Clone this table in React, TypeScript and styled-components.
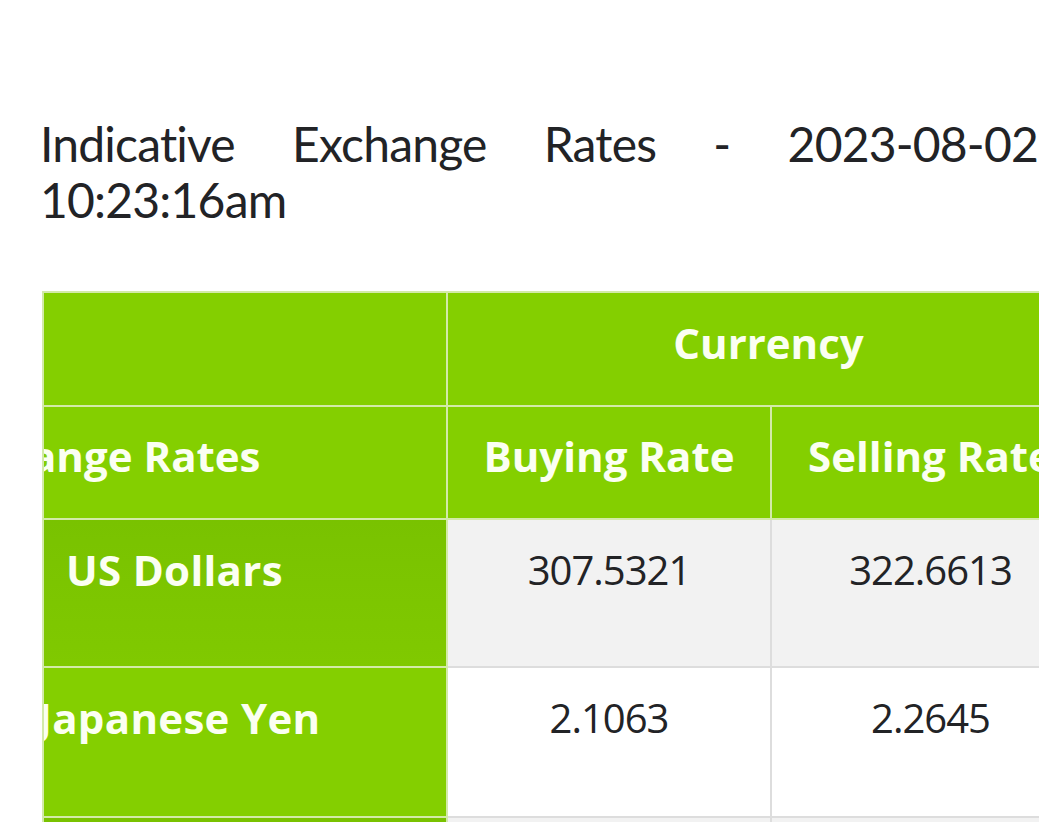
import React from "react";
import styled, { createGlobalStyle } from "styled-components";

const GlobalStyle = createGlobalStyle`
  html, body {
    margin: 0;
    padding: 0;
    background: #ffffff;
  }
  body {
    font-family: "Open Sans", "Liberation Sans", sans-serif;
    overflow: hidden;
  }
`;

const Page = styled.main`
  padding: 0 10px 0 40px;
`;

const Title = styled.h1`
  margin: 116px 0 63px;
  font-family: Lato, "Liberation Sans", sans-serif;
  font-weight: 400;
  font-size: 48px;
  line-height: 56px;
  letter-spacing: -0.8px;
  color: #222326;
  text-align: justify;
`;

const TableWrap = styled.div`
  margin-left: 2px;
  width: 997px;
  overflow: hidden;
`;

const RatesTable = styled.table`
  border-collapse: collapse;
  table-layout: fixed;
  width: 1047px;
`;

const HeadCell = styled.th<{ $height: number }>`
  height: ${(p) => p.$height}px;
  padding: 0 0 14px;
  box-sizing: border-box;
  background: #84cf00;
  color: #fbfff2;
  font-family: "Open Sans", "Liberation Sans", sans-serif;
  font-weight: 700;
  font-size: 42px;
  letter-spacing: 0;
  text-align: center;
  vertical-align: middle;
  white-space: nowrap;
  overflow: hidden;
  border: 2px solid #d3eaa9;
`;

const LabelCell = styled.th<{ $dark?: boolean; $height: number }>`
  height: ${(p) => p.$height}px;
  padding: 21px 0 0;
  background: ${(p) =>
    p.$dark ? "linear-gradient(#79c200, #80c900)" : "#84cf00"};
  color: #fbfff2;
  font-family: "Open Sans", "Liberation Sans", sans-serif;
  font-weight: 700;
  font-size: 42px;
  letter-spacing: 0.3px;
  text-align: left;
  vertical-align: top;
  white-space: nowrap;
  overflow: hidden;
  border: 2px solid #d3eaa9;
  box-sizing: border-box;
`;

const Label = styled.span<{ $shift: number }>`
  display: inline-block;
  margin-left: ${(p) => p.$shift}px;
`;

const HeadLabel = styled.span<{ $shift: number }>`
  display: block;
  text-align: left;
  margin-left: ${(p) => p.$shift}px;
`;

const ValueCell = styled.td<{ $striped?: boolean; $height: number }>`
  height: ${(p) => p.$height}px;
  padding: 22px 0 0;
  background: ${(p) => (p.$striped ? "#f2f2f2" : "#ffffff")};
  color: #222326;
  font-family: "Open Sans", "Liberation Sans", sans-serif;
  font-weight: 400;
  font-size: 40px;
  letter-spacing: -1px;
  text-align: center;
  vertical-align: top;
  white-space: nowrap;
  border: 2px solid #dddddd;
  box-sizing: border-box;
`;

type Row = {
  name: string;
  buy: string;
  sell: string;
  shift: number;
  dark?: boolean;
  striped?: boolean;
  height: number;
};

const rows: Row[] = [
  { name: "US Dollars", buy: "307.5321", sell: "322.6613", shift: 22, dark: true, striped: true, height: 148 },
  { name: "Japanese Yen", buy: "2.1063", sell: "2.2645", shift: -6, striped: false, height: 150 },
  { name: "Euro", buy: "337.2215", sell: "355.4420", shift: 22, dark: true, striped: true, height: 150 },
];

export default function App() {
  return (
    <>
      <GlobalStyle />
      <Page>
        <Title>Indicative Exchange Rates - 2023-08-02 10:23:16am</Title>
        <TableWrap>
          <RatesTable>
            <colgroup>
              <col style={{ width: 404 }} />
              <col style={{ width: 324 }} />
              <col style={{ width: 319 }} />
            </colgroup>
            <thead>
              <tr>
                <HeadCell $height={114} />
                <HeadCell $height={114} colSpan={2}>
                  Currency
                </HeadCell>
              </tr>
              <tr>
                <HeadCell $height={113}>
                  <HeadLabel $shift={-110}>Exchange Rates</HeadLabel>
                </HeadCell>
                <HeadCell $height={113}>Buying Rate</HeadCell>
                <HeadCell $height={113}>Selling Rate</HeadCell>
              </tr>
            </thead>
            <tbody>
              {rows.map((r) => (
                <tr key={r.name}>
                  <LabelCell $dark={r.dark} $height={r.height}>
                    <Label $shift={r.shift}>{r.name}</Label>
                  </LabelCell>
                  <ValueCell $striped={r.striped} $height={r.height}>
                    {r.buy}
                  </ValueCell>
                  <ValueCell $striped={r.striped} $height={r.height}>
                    {r.sell}
                  </ValueCell>
                </tr>
              ))}
            </tbody>
          </RatesTable>
        </TableWrap>
      </Page>
    </>
  );
}
